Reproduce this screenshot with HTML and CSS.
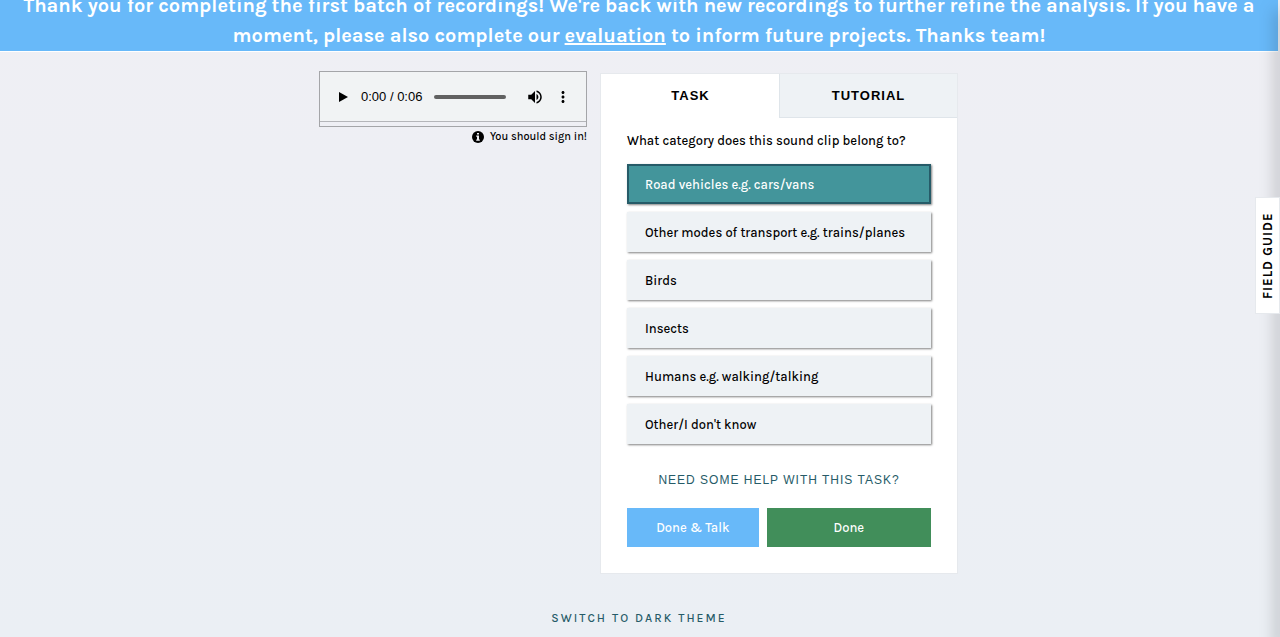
FILE: index.html
```html
<!DOCTYPE html>
<html lang="en">
<head>
    <meta charset="UTF-8">
    <meta name="viewport" content="width=device-width, initial-scale=1.0">
    <title>Classify</title>
    <link rel="stylesheet" href="styles.css">
</head>
<body>
    <!-- Announcement banner -->
    <div class="banner">
        Thank you for completing the first batch of recordings! We're back with new recordings to further refine the analysis. If you have a moment, please also complete our <a href="#evaluation">evaluation</a> to inform future projects. Thanks team!
    </div>

    <!-- Classifier -->
    <main class="classifier">
        <section class="subject">
            <div class="subject-frame">
                <div class="player">
                    <button type="button" class="player-button" aria-label="Play">
                        <svg width="10" height="10" viewBox="0 0 10 10"><path d="M1 0v10l9-5z"/></svg>
                    </button>
                    <span class="player-time">0:00 / 0:06</span>
                    <input type="range" class="player-track" min="0" max="6" value="0" aria-label="Seek">
                    <button type="button" class="player-button player-volume" aria-label="Mute">
                        <svg width="18" height="18" viewBox="0 0 24 24"><path d="M3 9v6h4l5 5V4L7 9H3zm13.5 3c0-1.77-1.02-3.29-2.5-4.03v8.05c1.48-.73 2.5-2.25 2.5-4.02zM14 3.23v2.06c2.89.86 5 3.54 5 6.71s-2.11 5.85-5 6.71v2.06c4.01-.91 7-4.49 7-8.77s-2.99-7.86-7-8.77z"/></svg>
                    </button>
                    <button type="button" class="player-button" aria-label="More options">
                        <svg width="18" height="18" viewBox="0 0 24 24"><path d="M12 8c1.1 0 2-.9 2-2s-.9-2-2-2-2 .9-2 2 .9 2 2 2zm0 2c-1.1 0-2 .9-2 2s.9 2 2 2 2-.9 2-2-.9-2-2-2zm0 6c-1.1 0-2 .9-2 2s.9 2 2 2 2-.9 2-2-.9-2-2-2z"/></svg>
                    </button>
                </div>
            </div>
            <div class="sign-in">
                <svg width="12" height="12" viewBox="0 0 12 12"><circle cx="6" cy="6" r="6"/><path fill="#eff0f4" d="M5 2h2v1.6H5zM4.2 4.6H7v3.9h.8v1.2H4.2V8.5H5V5.8h-.8z"/></svg>
                <span>You should sign in!</span>
            </div>
        </section>

        <section class="task-area">
            <nav class="tabs">
                <button type="button" class="tab active">TASK</button>
                <button type="button" class="tab">TUTORIAL</button>
            </nav>
            <form class="task">
                <fieldset class="answers">
                    <legend>What category does this sound clip belong to?</legend>
                    <label class="answer"><input type="radio" name="category" checked><span>Road vehicles e.g. cars/vans</span></label>
                    <label class="answer"><input type="radio" name="category"><span>Other modes of transport e.g. trains/planes</span></label>
                    <label class="answer"><input type="radio" name="category"><span>Birds</span></label>
                    <label class="answer"><input type="radio" name="category"><span>Insects</span></label>
                    <label class="answer"><input type="radio" name="category"><span>Humans e.g. walking/talking</span></label>
                    <label class="answer"><input type="radio" name="category"><span>Other/I don't know</span></label>
                </fieldset>
                <button type="button" class="help-button">NEED SOME HELP WITH THIS TASK?</button>
                <div class="task-nav">
                    <a href="#talk" class="talk-link">Done &amp; Talk</a>
                    <button type="button" class="done-button">Done</button>
                </div>
            </form>
        </section>
    </main>

    <div class="theme-switch">
        <button type="button">SWITCH TO DARK THEME</button>
    </div>

    <!-- Field guide drawer, closed -->
    <aside class="field-guide">
        <button type="button">FIELD GUIDE</button>
    </aside>
</body>
</html>
```

FILE: styles.css
```css
* {
    box-sizing: border-box;
}
body {
    min-height: 100vh;
    margin: 0;
    padding-right: 2px;
    background: linear-gradient(#efeff4, #ebeff4);
    color: #000;
    font-family: Karla, "Noto Sans", sans-serif;
    font-size: 13px;
    font-weight: 500;
    overflow: hidden;
}
button {
    padding: 0;
    border: 0;
    background: none;
    color: inherit;
    font-family: inherit;
    font-size: inherit;
    font-weight: inherit;
    cursor: pointer;
}
/* Banner, scrolled partly out of view */
.banner {
    margin-top: -9px;
    padding: 0 16px;
    border-bottom: 1px solid #fff;
    background-color: #68b9f9;
    color: #fff;
    font-size: 20px;
    font-weight: 700;
    line-height: 30px;
    text-align: center;
}
.banner a {
    color: #fff;
}
/* Classifier layout */
.classifier {
    display: flex;
    justify-content: center;
    align-items: flex-start;
    gap: 13px;
    padding: 19px 21px 0 20px;
}
.subject {
    width: 268px;
}
.subject-frame {
    padding-bottom: 4px;
    border: 1px solid #a4a5a8;
}
.player {
    display: flex;
    align-items: center;
    height: 50px;
    padding: 0 14px 0 18px;
    border-bottom: 1px solid #b4b5b9;
    background-color: #f1f3f4;
    font-family: "Liberation Sans", sans-serif;
}
.player-button {
    display: flex;
}
.player-time {
    margin: 0 12px 0 13px;
    font-weight: 400;
    white-space: nowrap;
}
.player-track {
    flex: 1;
    min-width: 0;
    height: 4px;
    margin: 0;
    border-radius: 2px;
    background-color: #616161;
    appearance: none;
}
.player-track::-webkit-slider-thumb {
    appearance: none;
    width: 0;
    height: 0;
}
.player-volume {
    margin: 0 10px 0 20px;
}
.sign-in {
    display: flex;
    justify-content: flex-end;
    align-items: center;
    gap: 6px;
    padding-top: 2px;
    font-size: 11px;
    line-height: 16px;
}
/* Task card */
.task-area {
    width: 358px;
    margin-top: 2px;
    border: 1px solid #e6e9ed;
    background-color: #fff;
}
.tabs {
    display: flex;
}
.tab {
    flex: 1;
    height: 44px;
    border: 1px solid #dfe5ea;
    border-width: 0 0 1px 1px;
    background-color: #eef2f5;
    font-family: "Liberation Sans", sans-serif;
    font-weight: 700;
    letter-spacing: 1px;
}
.tab.active {
    border-color: #fff;
    background-color: #fff;
}
.task {
    padding: 13px 26px 26px;
}
.answers {
    display: flex;
    flex-direction: column;
    gap: 8px;
    min-width: 0;
    margin: 0;
    padding: 0;
    border: 0;
}
.answers legend {
    margin-bottom: 13px;
    padding: 0;
    line-height: 20px;
}
.answer {
    display: flex;
    align-items: center;
    height: 40px;
    padding: 0 16px;
    border: 2px solid #eef2f5;
    background-color: #eef2f5;
    box-shadow: 1px 1px 2px rgba(0, 0, 0, 0.5);
    cursor: pointer;
}
.answer:has(:checked) {
    border-color: #265b68;
    background-color: #43959b;
    color: #fff;
}
.answer input {
    width: 0;
    height: 0;
    margin: 0;
    appearance: none;
}
.help-button {
    display: block;
    margin: 28px auto 20px;
    color: #265b68;
    font-family: "Liberation Sans", sans-serif;
    font-size: 12px;
    font-weight: 400;
    line-height: 16px;
    letter-spacing: 1px;
}
.task-nav {
    display: flex;
    gap: 8px;
}
.talk-link,
.done-button {
    height: 39px;
    color: #fff;
    line-height: 39px;
    text-align: center;
    text-decoration: none;
}
.talk-link {
    flex: 4;
    background-color: #68b9f9;
}
.done-button {
    flex: 5;
    background-color: #418e5a;
}
/* Theme toggle */
.theme-switch {
    padding: 34px 0 9px;
    text-align: center;
}
.theme-switch button {
    color: #265b68;
    font-size: 12px;
    line-height: 20px;
    letter-spacing: 2px;
}
/* Field guide */
.field-guide {
    position: fixed;
    top: 0;
    bottom: 0;
    left: 100%;
    box-shadow: 0 12px 16px 2px rgba(0, 0, 0, 0.5);
}
.field-guide button {
    position: absolute;
    top: 197px;
    right: 0;
    width: 25px;
    height: 117px;
    border: 1px solid #e6e9ed;
    background-color: #fff;
    font-weight: 700;
    letter-spacing: 1px;
    writing-mode: vertical-rl;
    transform: rotate(180deg);
}
```
